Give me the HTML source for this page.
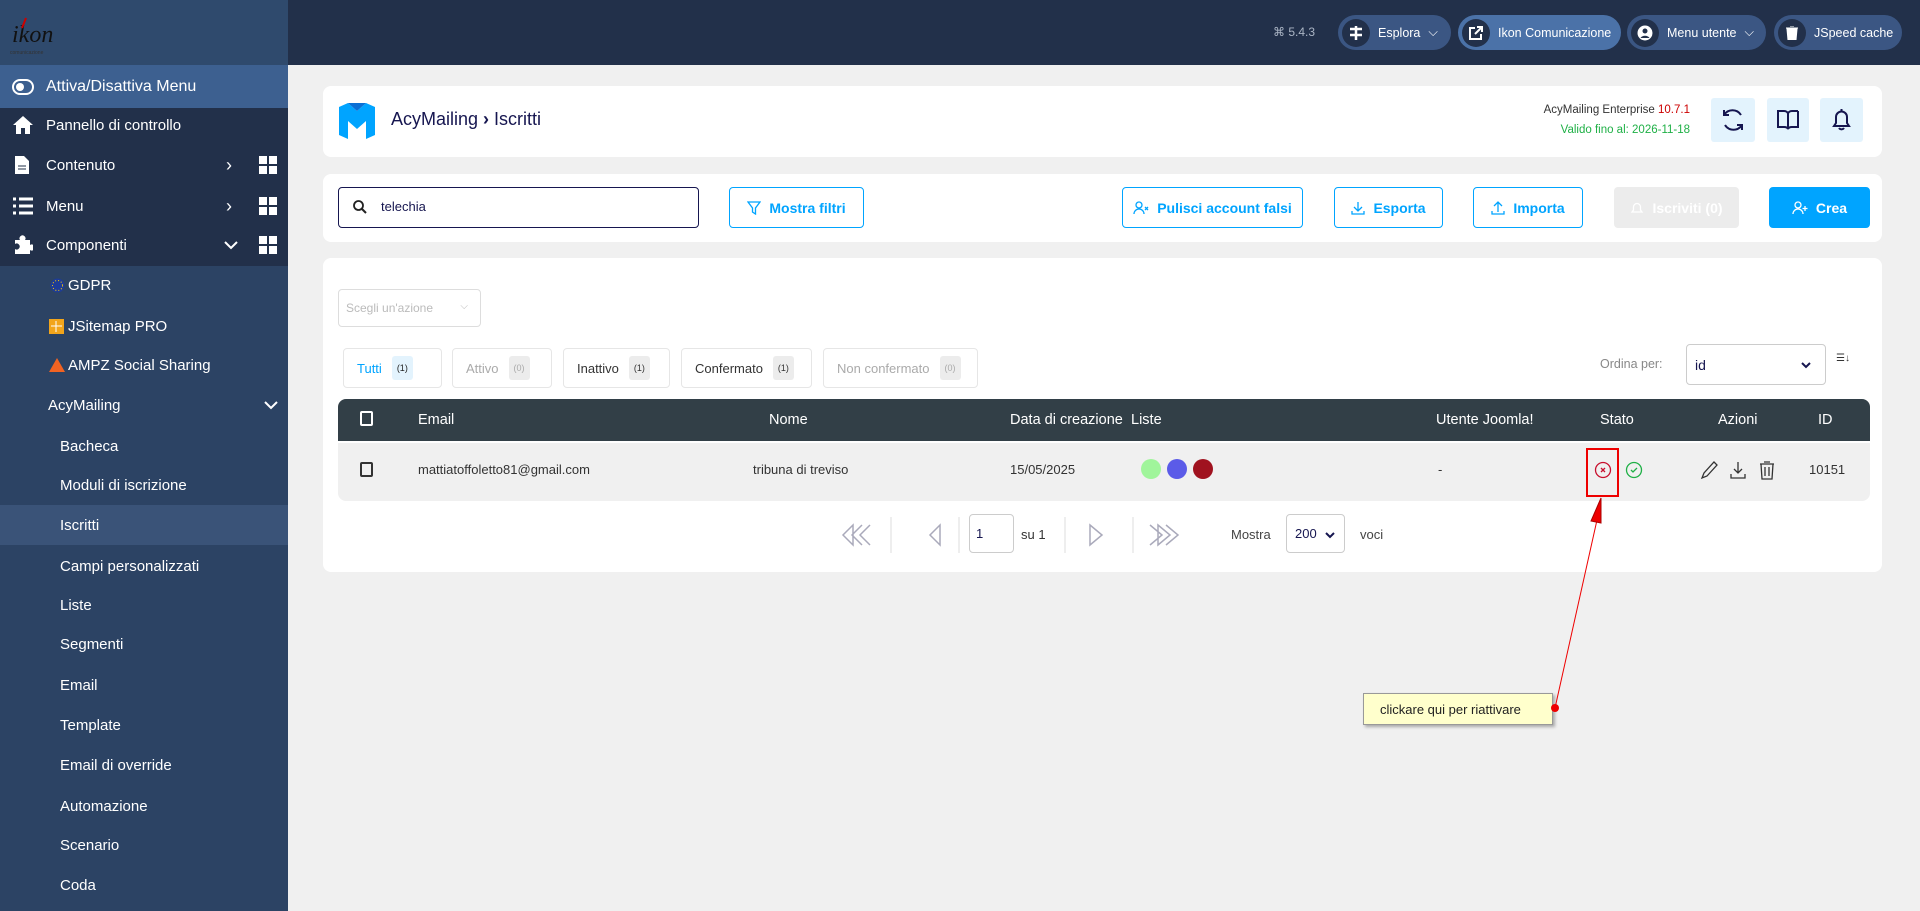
<!DOCTYPE html>
<html><head><meta charset="utf-8"><style>
*{box-sizing:border-box;margin:0;padding:0}
body{width:1920px;height:911px;overflow:hidden;background:#f0f0f0;font-family:"Liberation Sans",sans-serif;position:relative}
.abs{position:absolute}
#side{left:0;top:0;width:288px;height:911px;background:#2c4364}
.logo{left:0;top:0;width:288px;height:65px;background:#2f4a6d}
.srow{position:absolute;left:0;width:288px;height:40px;color:#fff;font-size:15px;display:flex;align-items:center}
.srow svg{position:absolute}
#top{left:288px;top:0;width:1632px;height:65px;background:#22304a}
.pill{position:absolute;top:15px;height:35px;border-radius:18px;background:#3b5683;color:#fff;font-size:12.5px;display:flex;align-items:center}
.pill .ic{width:28px;height:28px;border-radius:14px;background:#22304a;margin:0 8px 0 4px;display:flex;align-items:center;justify-content:center}
.panel{position:absolute;left:323px;width:1559px;background:#fff;border-radius:8px}
.btn{position:absolute;top:187px;height:41px;border:1px solid #00a4ff;border-radius:4px;color:#00a4ff;font-size:14px;font-weight:bold;display:flex;align-items:center;justify-content:center;gap:8px;background:#fff}
.tab{position:absolute;top:348px;height:40px;border:1px solid #e6e6e6;border-radius:4px;font-size:13px;display:flex;align-items:center;padding-left:13px;color:#333}
.tab b{font-weight:normal;font-size:9px;background:#ececec;border-radius:3px;padding:7px 5px;margin-left:10px}
.th{position:absolute;top:412px;color:#fff;font-size:14.5px}
.td{position:absolute;top:462px;color:#333;font-size:13px}
</style></head><body>
<div id="side" class="abs">
 <div class="abs logo"><svg width="80" height="50" style="position:absolute;left:8px;top:10px"><text x="4" y="32" font-family="Liberation Serif" font-style="italic" font-size="24" fill="#111">ikon</text><line x1="18" y1="8" x2="14" y2="18" stroke="#c00" stroke-width="2"/><text x="2" y="44" font-size="5" fill="#333">comunicazione</text></svg></div>
 <div class="srow" style="top:65px;height:43px;background:#3d6090;font-size:16px"><svg style="left:12px" width="22" height="16"><rect x="1" y="1" width="20" height="14" rx="7" fill="none" stroke="#fff" stroke-width="2"/><circle cx="8" cy="8" r="4" fill="#fff"/></svg><span style="margin-left:46px">Attiva/Disattiva Menu</span></div>
 <div class="abs" style="left:0;top:108px;width:288px;height:158px;background:#22304a"></div>
 <div class="srow" style="top:105px"><svg style="left:12px" width="22" height="20"><path d="M11 1L1 10h3v9h5v-6h4v6h5v-9h3z" fill="#fff"/></svg><span style="margin-left:46px">Pannello di controllo</span></div>
 <div class="srow" style="top:145px"><svg style="left:14px" width="16" height="20"><path d="M1 1h9l5 5v13H1z" fill="#fff"/><path d="M4 11h8M4 14h8" stroke="#22304a"/></svg><span style="margin-left:46px">Contenuto</span><span style="position:absolute;left:226px;font-size:18px">›</span><svg style="left:259px" width="18" height="18"><rect width="8" height="8" fill="#fff"/><rect x="10" width="8" height="8" fill="#fff"/><rect y="10" width="8" height="8" fill="#fff"/><rect x="10" y="10" width="8" height="8" fill="#fff"/></svg></div>
 <div class="srow" style="top:186px"><svg style="left:13px" width="20" height="18"><path d="M0 2h3M6 2h14M0 9h3M6 9h14M0 16h3M6 16h14" stroke="#fff" stroke-width="3"/></svg><span style="margin-left:46px">Menu</span><span style="position:absolute;left:226px;font-size:18px">›</span><svg style="left:259px" width="18" height="18"><rect width="8" height="8" fill="#fff"/><rect x="10" width="8" height="8" fill="#fff"/><rect y="10" width="8" height="8" fill="#fff"/><rect x="10" y="10" width="8" height="8" fill="#fff"/></svg></div>
 <div class="srow" style="top:225px"><svg style="left:13px" width="20" height="20"><path d="M2 5h5a3 3 0 1 1 5 0h5v5a3 3 0 1 1 0 5v4H2v-5a3 3 0 1 0 0-5z" fill="#fff"/></svg><span style="margin-left:46px">Componenti</span><svg style="left:224px" width="14" height="10"><path d="M1 2l6 6 6-6" stroke="#fff" stroke-width="2" fill="none"/></svg><svg style="left:259px" width="18" height="18"><rect width="8" height="8" fill="#fff"/><rect x="10" width="8" height="8" fill="#fff"/><rect y="10" width="8" height="8" fill="#fff"/><rect x="10" y="10" width="8" height="8" fill="#fff"/></svg></div>
 <div class="srow" style="top:265px"><svg style="left:50px" width="15" height="15"><circle cx="7.5" cy="7.5" r="7" fill="#1e3c96"/><circle cx="7.5" cy="7.5" r="5" fill="none" stroke="#fc0" stroke-dasharray="1 2"/></svg><span style="margin-left:68px">GDPR</span></div>
 <div class="srow" style="top:306px"><svg style="left:49px" width="15" height="15"><rect width="15" height="15" fill="#f2a51c"/><path d="M2 7h11M7 2v11" stroke="#fff"/></svg><span style="margin-left:68px">JSitemap PRO</span></div>
 <div class="srow" style="top:345px"><svg style="left:49px" width="16" height="14"><path d="M8 0L16 14H0z" fill="#f26322"/></svg><span style="margin-left:68px">AMPZ Social Sharing</span></div>
 <div class="srow" style="top:385px"><span style="margin-left:48px">AcyMailing</span><svg style="left:264px" width="14" height="10"><path d="M1 2l6 6 6-6" stroke="#fff" stroke-width="2" fill="none"/></svg></div>
 <div class="srow" style="top:426px"><span style="margin-left:60px">Bacheca</span></div>
 <div class="srow" style="top:465px"><span style="margin-left:60px">Moduli di iscrizione</span></div>
 <div class="srow" style="top:505px;background:#3a5378"><span style="margin-left:60px">Iscritti</span></div>
 <div class="srow" style="top:546px"><span style="margin-left:60px">Campi personalizzati</span></div>
 <div class="srow" style="top:585px"><span style="margin-left:60px">Liste</span></div>
 <div class="srow" style="top:624px"><span style="margin-left:60px">Segmenti</span></div>
 <div class="srow" style="top:665px"><span style="margin-left:60px">Email</span></div>
 <div class="srow" style="top:705px"><span style="margin-left:60px">Template</span></div>
 <div class="srow" style="top:745px"><span style="margin-left:60px">Email di override</span></div>
 <div class="srow" style="top:786px"><span style="margin-left:60px">Automazione</span></div>
 <div class="srow" style="top:825px"><span style="margin-left:60px">Scenario</span></div>
 <div class="srow" style="top:865px"><span style="margin-left:60px">Coda</span></div>
</div>
<div id="top" class="abs"></div>
<div class="abs" style="left:1273px;top:25px;color:#aab4c4;font-size:12px">⌘ 5.4.3</div>
<div class="pill" style="left:1338px;width:113px"><div class="ic"><svg width="14" height="14"><path d="M1 3h12M1 9h12M7 0v14" stroke="#fff" stroke-width="2.5"/></svg></div>Esplora <span style="margin-left:8px">⌵</span></div>
<div class="pill" style="left:1458px;width:163px;background:#4b72a8"><div class="ic"><svg width="14" height="14"><path d="M6 2H1v11h11V8M8 1h5v5M13 1L6 8" stroke="#fff" stroke-width="2" fill="none"/></svg></div>Ikon Comunicazione</div>
<div class="pill" style="left:1627px;width:139px"><div class="ic"><svg width="16" height="16"><circle cx="8" cy="8" r="7.5" fill="#fff"/><circle cx="8" cy="6" r="2.5" fill="#22304a"/><path d="M3.5 13a5 4 0 0 1 9 0" fill="#22304a"/></svg></div>Menu utente <span style="margin-left:8px">⌵</span></div>
<div class="pill" style="left:1774px;width:128px"><div class="ic"><svg width="12" height="14"><path d="M0 2h12M4 0h4M1 3h10l-1 11H2z" fill="#fff" stroke="#fff"/></svg></div>JSpeed cache</div>

<div class="panel" style="top:86px;height:71px"></div>
<svg class="abs" style="left:339px;top:103px" width="36" height="36"><path d="M0 4l9-4 9 8 9-8 9 4v28l-9 4V18l-9 8-9-8v18l-9-4z" fill="#00a4ff"/><path d="M9 0l9 8 9-8" fill="#0b6fd4"/></svg>
<div class="abs" style="left:391px;top:109px;font-size:18px;color:#161650">AcyMailing <b>›</b> Iscritti</div>
<div class="abs" style="left:1490px;width:200px;text-align:right;top:104px;font-size:11.5px;color:#333">AcyMailing Enterprise <span style="color:#c00">10.7.1</span></div>
<div class="abs" style="left:1490px;width:200px;text-align:right;top:124px;font-size:11.5px;color:#1fb046">Valido fino al: 2026-11-18</div>
<div class="abs" style="left:1711px;top:98px;width:44px;height:44px;background:#e3f3fd;border-radius:3px"><svg width="44" height="44"><path d="M30 17a10 10 0 0 0-17 0M13 12v5h5M14 27a10 10 0 0 0 17 0M31 32v-5h-5" stroke="#161650" stroke-width="2" fill="none"/></svg></div>
<div class="abs" style="left:1767px;top:98px;width:42px;height:44px;background:#e3f3fd;border-radius:3px"><svg width="42" height="44"><path d="M11 13h6a4 3 0 0 1 4 3v15a4 3 0 0 0-4-2h-6zM31 13h-6a4 3 0 0 0-4 3M31 13v16h-6a4 3 0 0 0-4 2" stroke="#161650" stroke-width="2" fill="none"/></svg></div>
<div class="abs" style="left:1820px;top:98px;width:43px;height:44px;background:#e3f3fd;border-radius:3px"><svg width="43" height="44"><path d="M14 28h15l-2-3v-6a5.5 5.5 0 0 0-11 0v6zM19 30a3 3 0 0 0 5 0M21.5 11v2" stroke="#161650" stroke-width="2" fill="none"/></svg></div>

<div class="panel" style="top:174px;height:68px"></div>
<div class="abs" style="left:338px;top:187px;width:361px;height:41px;border:1.5px solid #161650;border-radius:4px"><svg style="position:absolute;left:14px;top:12px" width="14" height="14"><circle cx="5.5" cy="5.5" r="4.5" stroke="#222" stroke-width="1.8" fill="none"/><path d="M9 9l4 4" stroke="#222" stroke-width="2"/></svg><span style="position:absolute;left:42px;top:11px;font-size:13px;color:#161650">telechia</span></div>
<div class="btn" style="left:729px;width:135px"><svg width="14" height="14"><path d="M1 1h12L8.5 7v6l-3-2V7z" fill="none" stroke="#00a4ff" stroke-width="1.3"/></svg>Mostra filtri</div>
<div class="btn" style="left:1122px;width:181px"><svg width="16" height="14"><circle cx="6" cy="4" r="3" fill="none" stroke="#00a4ff" stroke-width="1.3"/><path d="M1 13a5 5 0 0 1 10 0M12 6l3 3M15 6l-3 3" fill="none" stroke="#00a4ff" stroke-width="1.3"/></svg>Pulisci account falsi</div>
<div class="btn" style="left:1334px;width:109px"><svg width="14" height="14"><path d="M7 1v9M3 6l4 4 4-4M1 10v3h12v-3" fill="none" stroke="#00a4ff" stroke-width="1.3"/></svg>Esporta</div>
<div class="btn" style="left:1473px;width:110px"><svg width="14" height="14"><path d="M7 11V1M3 5l4-4 4 4M1 10v3h12v-3" fill="none" stroke="#00a4ff" stroke-width="1.3"/></svg>Importa</div>
<div class="btn" style="left:1614px;width:125px;border-color:#ececec;background:#ececec;color:#fff"><svg width="14" height="14"><path d="M2 11h10l-1.5-2V6a3.5 3.5 0 0 0-7 0v3z" fill="none" stroke="#fff" stroke-width="1.3"/></svg>Iscriviti (0)</div>
<div class="btn" style="left:1769px;width:101px;background:#00a4ff;color:#fff"><svg width="16" height="14"><circle cx="6" cy="4" r="3" fill="none" stroke="#fff" stroke-width="1.3"/><path d="M1 13a5 5 0 0 1 10 0M13 5v5M10.5 7.5h5" fill="none" stroke="#fff" stroke-width="1.3"/></svg>Crea</div>

<div class="panel" style="top:258px;height:314px"></div>
<div class="abs" style="left:338px;top:289px;width:143px;height:38px;border:1px solid #ddd;border-radius:4px;font-size:12px;color:#bbb;padding:11px 0 0 7px">Scegli un'azione<span style="position:absolute;right:12px;font-size:10px">⌵</span></div>
<div class="tab" style="left:343px;width:99px;color:#00a4ff">Tutti<b style="background:#e3f3fd;color:#222">(1)</b></div>
<div class="tab" style="left:452px;width:100px;color:#aaa">Attivo<b>(0)</b></div>
<div class="tab" style="left:563px;width:107px">Inattivo<b>(1)</b></div>
<div class="tab" style="left:681px;width:131px">Confermato<b>(1)</b></div>
<div class="tab" style="left:823px;width:155px;color:#aaa">Non confermato<b>(0)</b></div>
<div class="abs" style="left:1600px;top:357px;font-size:12.5px;color:#888">Ordina per:</div>
<div class="abs" style="left:1686px;top:344px;width:140px;height:41px;border:1px solid #ccc;border-radius:4px;font-size:14px;color:#161650;padding:12px 0 0 8px">id<svg style="position:absolute;right:14px;top:17px" width="10" height="7"><path d="M1 1l4 4 4-4" stroke="#161650" stroke-width="2" fill="none"/></svg></div>
<div class="abs" style="left:1836px;top:353px;font-size:10px;color:#333">☰↓</div>

<div class="abs" style="left:338px;top:399px;width:1532px;height:42px;background:#323f47;border-radius:8px 8px 0 0"></div>
<div class="abs" style="left:338px;top:443px;width:1532px;height:58px;background:#f0f0f0;border-radius:0 0 8px 8px"></div>
<div class="abs" style="left:360px;top:411px;width:13px;height:15px;border:2px solid #fff;border-radius:2px"></div>
<div class="th" style="left:418px">Email</div><div class="th" style="left:769px">Nome</div><div class="th" style="left:1010px">Data di creazione</div><div class="th" style="left:1131px">Liste</div><div class="th" style="left:1436px">Utente Joomla!</div><div class="th" style="left:1600px">Stato</div><div class="th" style="left:1718px">Azioni</div><div class="th" style="left:1818px">ID</div>
<div class="abs" style="left:360px;top:462px;width:13px;height:15px;border:2px solid #333;border-radius:2px"></div>
<div class="td" style="left:418px">mattiatoffoletto81@gmail.com</div><div class="td" style="left:753px">tribuna di treviso</div><div class="td" style="left:1010px">15/05/2025</div>
<div class="abs" style="left:1141px;top:459px;width:20px;height:20px;border-radius:50%;background:#a0f59b"></div>
<div class="abs" style="left:1167px;top:459px;width:20px;height:20px;border-radius:50%;background:#5b5be8"></div>
<div class="abs" style="left:1193px;top:459px;width:20px;height:20px;border-radius:50%;background:#a0121f"></div>
<div class="td" style="left:1438px">-</div>
<svg class="abs" style="left:1594px;top:461px" width="18" height="18"><circle cx="9" cy="9" r="7.5" stroke="#c8102e" stroke-width="1.3" fill="none"/><path d="M7 7l4 4M11 7l-4 4" stroke="#c8102e" stroke-width="1.3"/></svg>
<svg class="abs" style="left:1625px;top:461px" width="18" height="18"><circle cx="9" cy="9" r="7.5" stroke="#1fb046" stroke-width="1.3" fill="none"/><path d="M6 9l2 2 4-4" stroke="#1fb046" stroke-width="1.3" fill="none"/></svg>
<div class="abs" style="left:1586px;top:448px;width:33px;height:49px;border:2px solid #e00"></div>
<svg class="abs" style="left:1700px;top:460px" width="90" height="20"><path d="M2 18l2-5 10-11 3 3-10 11z" stroke="#333" stroke-width="1.3" fill="none"/><path d="M38 2v11M34 9l4 4 4-4M31 14v4h14v-4" stroke="#333" stroke-width="1.3" fill="none"/><path d="M60 4h14M64 2h6M61 4l1 15h10l1-15M65 7v9M69 7v9" stroke="#333" stroke-width="1.3" fill="none"/></svg>
<div class="td" style="left:1809px">10151</div>

<svg class="abs" style="left:840px;top:515px" width="340" height="40"><g stroke="#aab" stroke-width="1.5" fill="none"><path d="M13 10l-10 10 10 10zM22 10l-10 10 10 10M30 10l-10 10 10 10"/><path d="M100 10l-10 10 10 10z"/><path d="M250 10l12 10-12 10z"/><path d="M318 10l12 10-12 10zM310 10l12 10-12 10M326 10l12 10-12 10"/></g><g stroke="#ddd"><path d="M51 2v36M119 2v36M225 2v36M293 2v36"/></g></svg>
<div class="abs" style="left:969px;top:514px;width:45px;height:39px;border:1px solid #ccc;border-radius:4px;font-size:13px;color:#161650;padding:11px 0 0 6px">1</div>
<div class="abs" style="left:1021px;top:527px;font-size:13px;color:#333">su 1</div>
<div class="abs" style="left:1231px;top:527px;font-size:13px;color:#444">Mostra</div>
<div class="abs" style="left:1286px;top:514px;width:59px;height:39px;border:1px solid #ccc;border-radius:4px;font-size:13px;color:#161650;padding:11px 0 0 8px">200<svg style="position:absolute;left:38px;top:17px" width="10" height="7"><path d="M1 1l4 4 4-4" stroke="#161650" stroke-width="2" fill="none"/></svg></div>
<div class="abs" style="left:1360px;top:527px;font-size:13px;color:#444">voci</div>

<div class="abs" style="left:1363px;top:693px;width:190px;height:32px;background:#ffffcc;border:1px solid #999;box-shadow:2px 2px 3px rgba(0,0,0,.3);font-size:13px;color:#222;padding:8px 0 0 16px">clickare qui per riattivare</div>
<svg class="abs" style="left:0;top:0;pointer-events:none" width="1920" height="911"><line x1="1555" y1="708" x2="1597" y2="520" stroke="#e00" stroke-width="1"/><path d="M1601 498l-10 23 10 2z" fill="#e00" stroke="#a00"/><circle cx="1555" cy="708" r="4" fill="#e00"/></svg>
</body></html>
